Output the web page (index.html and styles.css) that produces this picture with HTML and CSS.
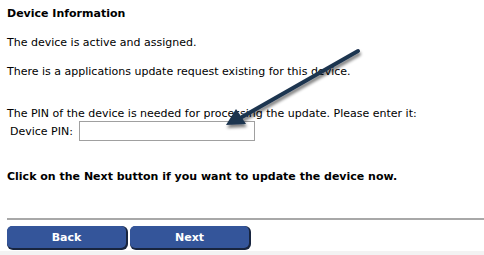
FILE: index.html
```html
<!DOCTYPE html>
<html>
<head>
<meta charset="utf-8">
<link rel="stylesheet" href="styles.css">
</head>
<body>
<div class="page">
  <div class="content">
    <div class="title">Device Information</div>
    <p class="line l1">The device is active and assigned.</p>
    <p class="line l2">There is a applications update request existing for this device.</p>
    <p class="line l3">The PIN of the device is needed for processing the update. Please enter it:</p>
    <div class="pinrow">
      <label class="pinlabel" for="pin">Device PIN:</label>
      <input id="pin" class="pininput" type="text">
    </div>
    <p class="notice">Click on the Next button if you want to update the device now.</p>
    <hr class="rule">
    <div class="buttons">
      <button class="btn">Back</button>
      <button class="btn">Next</button>
    </div>
  </div>
  <div class="strip"></div>
  <svg class="arrow" width="484" height="255" viewBox="0 0 484 255">
    <defs>
      <filter id="sh" x="-20%" y="-20%" width="140%" height="140%">
        <feGaussianBlur in="SourceAlpha" stdDeviation="1.6"/>
        <feOffset dx="1" dy="3" result="b"/>
        <feComponentTransfer><feFuncA type="linear" slope="0.5"/></feComponentTransfer>
        <feMerge><feMergeNode/><feMergeNode in="SourceGraphic"/></feMerge>
      </filter>
    </defs>
    <g filter="url(#sh)">
      <line x1="358" y1="51" x2="242" y2="117" stroke="#1f3550" stroke-width="4" stroke-linecap="round"/>
      <polygon points="226,125 236,109 246,124" fill="#1f3550"/>
    </g>
  </svg>
</div>
</body>
</html>
```
FILE: styles.css
```css
html, body {
  margin: 0;
  padding: 0;
  background: #ffffff;
}
.page {
  position: relative;
  width: 484px;
  height: 255px;
  overflow: hidden;
  font-family: "DejaVu Sans", Verdana, sans-serif;
  font-size: 11px;
  color: #000;
}
.content {
  padding: 7px 0 0 7px;
  height: 251px;
  box-sizing: border-box;
}
.title {
  font-weight: bold;
  line-height: 14px;
}
.line {
  margin: 0;
  line-height: 14px;
}
.l1 { margin-top: 15px; }
.l2 { margin-top: 15px; }
.l3 { margin-top: 28px; }
.pinrow {
  display: flex;
  align-items: center;
  margin-top: 0;
  margin-left: 3px;
  gap: 6px;
}
.pininput {
  width: 176px;
  height: 20px;
  box-sizing: border-box;
  border: 1px solid #a0a0a0;
  padding: 0;
  margin: 0;
}
.notice {
  margin: 29px 0 0 0;
  font-weight: bold;
  line-height: 14px;
}
.rule {
  margin: 34px 0 0 0;
  border: 0;
  height: 2px;
  background: #a8a8a8;
}
.buttons {
  display: flex;
  gap: 4px;
  margin-top: 6px;
}
.btn {
  width: 119px;
  height: 22px;
  background: #34559a;
  color: #fff;
  font-family: "DejaVu Sans", Verdana, sans-serif;
  font-weight: bold;
  font-size: 11px;
  border: 0;
  border-radius: 5px;
  box-shadow: 1px 1px 0 1px #18253f;
  padding: 0;
}
.strip {
  height: 4px;
  background: #f3f3f3;
}
.arrow {
  position: absolute;
  left: 0;
  top: 0;
  pointer-events: none;
}
```
